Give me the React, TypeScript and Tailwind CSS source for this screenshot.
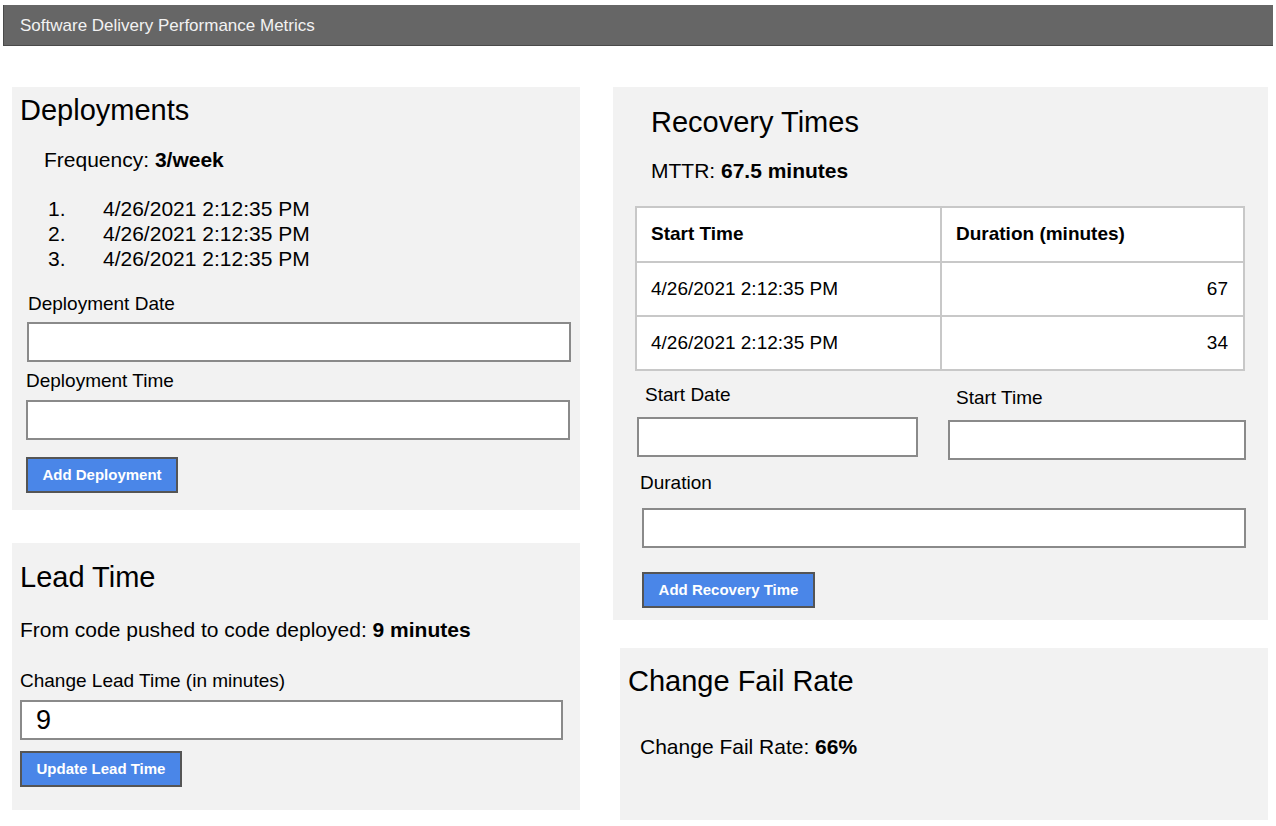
import React from "react";

const deployments = [
  "4/26/2021 2:12:35 PM",
  "4/26/2021 2:12:35 PM",
  "4/26/2021 2:12:35 PM",
];

const recoveries = [
  { start: "4/26/2021 2:12:35 PM", duration: 67 },
  { start: "4/26/2021 2:12:35 PM", duration: 34 },
];

function TextBox({ className = "", value }: { className?: string; value?: string }) {
  return (
    <input
      readOnly
      value={value ?? ""}
      className={`block h-[40px] bg-white border-2 border-[#8a8a8a] outline-none ${className}`}
    />
  );
}

function Button({ label, className = "" }: { label: string; className?: string }) {
  return (
    <button
      className={`block h-[36px] bg-[#4a86e8] border-2 border-[#555] text-white text-[15px] font-bold ${className}`}
    >
      {label}
    </button>
  );
}

export default function App() {
  return (
    <div
      className="min-h-[826px] bg-white text-black"
      style={{ fontFamily: '"Liberation Sans", Arial, sans-serif' }}
    >
      {/* Title bar */}
      <div className="mx-[3px] pt-[5px]">
        <div className="h-[41px] bg-[#666666] border-l border-b border-[#4a4a4a] flex items-center pl-[16px] pt-[2px]">
          <span className="text-[#f2f2f2] text-[17px]">Software Delivery Performance Metrics</span>
        </div>
      </div>

      <div className="flex pt-[41px]">
        {/* Left column */}
        <div className="ml-[12px] w-[568px] flex flex-col">
          {/* Deployments */}
          <section className="bg-[#f2f2f2] pt-[6px] pb-[17px]">
            <h2 className="ml-[8px] text-[29px] leading-[34px]">Deployments</h2>
            <p className="ml-[32px] mt-[20px] text-[21px] leading-[25px]">
              Frequency: <b>3/week</b>
            </p>
            <ol className="mt-[24px] text-[21px] leading-[25px]">
              {deployments.map((d, i) => (
                <li key={i} className="flex">
                  <span className="ml-[36px] w-[55px]">{i + 1}.</span>
                  <span>{d}</span>
                </li>
              ))}
            </ol>
            <label className="block ml-[16px] mt-[22px] text-[19px] leading-[22px]">Deployment Date</label>
            <TextBox className="ml-[15px] mt-[7px] w-[544px]" />
            <label className="block ml-[14px] mt-[8px] text-[19px] leading-[22px]">Deployment Time</label>
            <TextBox className="ml-[14px] mt-[8px] w-[544px]" />
            <Button label="Add Deployment" className="ml-[14px] mt-[17px] w-[152px]" />
          </section>

          {/* Lead Time */}
          <section className="bg-[#f2f2f2] mt-[33px] pt-[17px] pb-[23px] pl-[8px]">
            <h2 className="text-[29px] leading-[34px]">Lead Time</h2>
            <p className="mt-[23px] text-[21px] leading-[25px]">
              From code pushed to code deployed: <b>9 minutes</b>
            </p>
            <label className="block mt-[28px] text-[19px] leading-[22px]">Change Lead Time (in minutes)</label>
            <TextBox value="9" className="mt-[8px] w-[543px] h-[39px] pl-[14px] text-[27px]" />
            <Button label="Update Lead Time" className="mt-[11px] w-[162px]" />
          </section>
        </div>

        {/* Right column */}
        <div className="ml-[33px] w-[655px] flex flex-col">
          {/* Recovery Times */}
          <section className="bg-[#f2f2f2] pt-[18px] pb-[12px]">
            <h2 className="ml-[38px] text-[29px] leading-[34px]">Recovery Times</h2>
            <p className="ml-[38px] mt-[19px] text-[21px] leading-[25px]">
              MTTR: <b>67.5 minutes</b>
            </p>
            <table className="ml-[22px] mt-[23px] w-[610px] bg-white border-collapse text-[19px]">
              <thead>
                <tr className="h-[55px]">
                  <th className="w-[305px] border-2 border-[#c8c8c8] text-left font-bold pl-[14px]">Start Time</th>
                  <th className="border-2 border-[#c8c8c8] text-left font-bold pl-[14px]">Duration (minutes)</th>
                </tr>
              </thead>
              <tbody>
                {recoveries.map((r, i) => (
                  <tr key={i} className="h-[54px]">
                    <td className="border-2 border-[#c8c8c8] pl-[14px]">{r.start}</td>
                    <td className="border-2 border-[#c8c8c8] text-right pr-[15px]">{r.duration}</td>
                  </tr>
                ))}
              </tbody>
            </table>
            <div className="flex mt-[13px]">
              <div className="ml-[24px] w-[281px]">
                <label className="block ml-[8px] text-[19px] leading-[22px]">Start Date</label>
                <TextBox className="mt-[11px] w-[281px]" />
              </div>
              <div className="ml-[30px] w-[298px] pt-[3px]">
                <label className="block ml-[8px] text-[19px] leading-[22px]">Start Time</label>
                <TextBox className="mt-[11px] w-[298px] h-[39px]" />
              </div>
            </div>
            <label className="block ml-[27px] mt-[12px] text-[19px] leading-[22px]">Duration</label>
            <TextBox className="ml-[29px] mt-[14px] w-[604px] h-[39px]" />
            <Button label="Add Recovery Time" className="ml-[29px] mt-[24px] w-[173px] h-[35px]" />
          </section>

          {/* Change Fail Rate */}
          <section className="bg-[#f2f2f2] ml-[7px] mt-[28px] h-[172px] pt-[16px]">
            <h2 className="ml-[8px] text-[29px] leading-[34px]">Change Fail Rate</h2>
            <p className="ml-[20px] mt-[36px] text-[21px] leading-[25px]">
              Change Fail Rate: <b>66%</b>
            </p>
          </section>
        </div>
      </div>
    </div>
  );
}
